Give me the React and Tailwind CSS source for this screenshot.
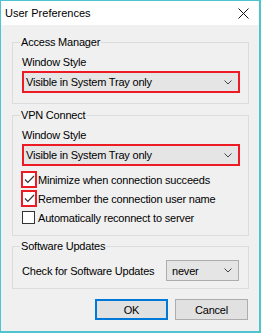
import React from "react";

const font = { fontFamily: '"Liberation Sans", Arial, sans-serif' };

function Chevron() {
  return (
    <svg width="8" height="5" viewBox="0 0 8 5" className="shrink-0">
      <polyline points="0.5,0.5 4,4 7.5,0.5" fill="none" stroke="#444" strokeWidth="1" />
    </svg>
  );
}

function Check() {
  return (
    <svg width="11" height="9" viewBox="0 0 11 9">
      <polyline points="1,4.5 3.8,7.3 10,1" fill="none" stroke="#333" strokeWidth="1.2" />
    </svg>
  );
}

// combo with the red highlight drawn around it
function RedCombo({ value }) {
  return (
    <div className="mt-[1px] h-[22px] w-[218px] border-2 border-[#ed1c24] bg-[#e5e5e5] flex items-center justify-between pl-[2px] pr-[6px]">
      <span>{value}</span>
      <Chevron />
    </div>
  );
}

function CheckRow({ label, checked, marked }) {
  return (
    <div className="h-[19px] flex items-center">
      {marked ? (
        <div className="w-[16px] h-[17px] -ml-[1px] border-2 border-[#ed1c24] bg-white flex items-center justify-center">
          {checked && <Check />}
        </div>
      ) : (
        <div className="w-[13px] h-[13px] border border-[#333] bg-white mr-[2px]" />
      )}
      <span className="ml-[1px]">{label}</span>
    </div>
  );
}

function Group({ title, className, children }) {
  return (
    <fieldset className={`border border-[#dcdcdc] ${className}`}>
      <legend className="ml-[7px] px-[1px] leading-[16px]">{title}</legend>
      {children}
    </fieldset>
  );
}

export default function App() {
  return (
    <div
      className="w-[261px] h-[333px] bg-[#f0f0f0] border-t border-l border-r-2 border-b-2 border-[#4fc3cf] flex flex-col text-[11px] leading-[16px] tracking-[-0.2px] text-black"
      style={font}
    >
      {/* TITLE BAR */}
      <div className="h-[24px] shrink-0 bg-white flex items-center justify-between pl-[4px] pr-[10px]">
        <span className="tracking-normal">User Preferences</span>
        <svg width="11" height="11" viewBox="0 0 11 11">
          <path d="M0.5 0.5 L10.5 10.5 M10.5 0.5 L0.5 10.5" stroke="#111" strokeWidth="1" />
        </svg>
      </div>

      {/* BODY */}
      <div className="flex flex-col pl-[11px] pr-[10px] pt-[9px]">
        <Group title="Access Manager">
          <div className="pl-[9px] pt-[4px] pb-[10px]">
            <div>Window Style</div>
            <RedCombo value="Visible in System Tray only" />
          </div>
        </Group>

        <Group title="VPN Connect" className="mt-[3px]">
          <div className="pl-[9px] pt-[4px] pb-[8px]">
            <div>Window Style</div>
            <RedCombo value="Visible in System Tray only" />
            <div className="mt-[4px]">
              <CheckRow label="Minimize when connection succeeds" checked marked />
              <CheckRow label="Remember the connection user name" checked marked />
              <CheckRow label="Automatically reconnect to server" />
            </div>
          </div>
        </Group>

        <Group title="Software Updates" className="mt-[2px]">
          <div className="pl-[9px] pr-[9px] pt-[6px] pb-[7px] flex items-center">
            <span>Check for Software Updates</span>
            <div className="ml-auto w-[73px] h-[21px] border border-[#adadad] bg-[#e5e5e5] flex items-center justify-between pl-[5px] pr-[6px]">
              <span>never</span>
              <Chevron />
            </div>
          </div>
        </Group>

        {/* BUTTONS */}
        <div className="mt-[10px] flex justify-end gap-[7px] pr-[1px]">
          <button className="w-[73px] h-[21px] border-2 border-[#0078d7] bg-[#e1e1e1] flex items-center justify-center">
            OK
          </button>
          <button className="w-[73px] h-[21px] border border-[#adadad] bg-[#e1e1e1] flex items-center justify-center">
            Cancel
          </button>
        </div>
      </div>
    </div>
  );
}
